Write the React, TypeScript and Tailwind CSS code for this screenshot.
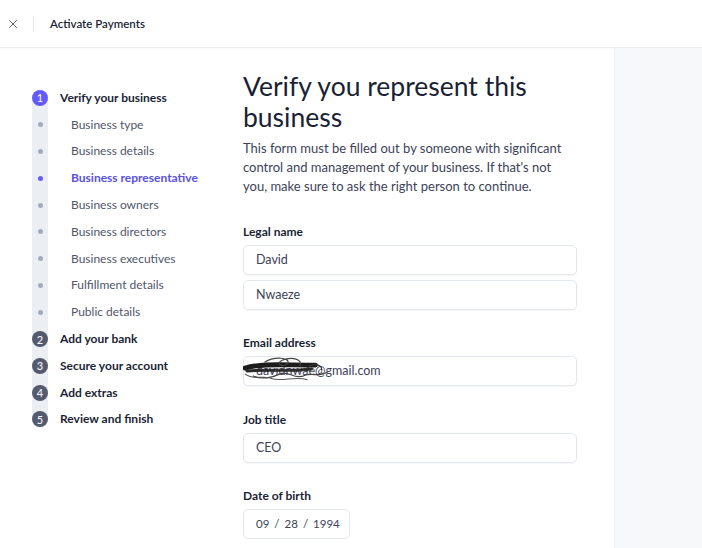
import { X } from "lucide-react";

type Row = { label: string; kind: "step" | "sub"; num?: number; active?: boolean; current?: boolean };

const rows: Row[] = [
  { label: "Verify your business", kind: "step", num: 1, active: true },
  { label: "Business type", kind: "sub" },
  { label: "Business details", kind: "sub" },
  { label: "Business representative", kind: "sub", current: true },
  { label: "Business owners", kind: "sub" },
  { label: "Business directors", kind: "sub" },
  { label: "Business executives", kind: "sub" },
  { label: "Fulfillment details", kind: "sub" },
  { label: "Public details", kind: "sub" },
  { label: "Add your bank", kind: "step", num: 2 },
  { label: "Secure your account", kind: "step", num: 3 },
  { label: "Add extras", kind: "step", num: 4 },
  { label: "Review and finish", kind: "step", num: 5 },
];

function StepRow({ row }: { row: Row }) {
  if (row.kind === "step") {
    return (
      <div className="flex h-[26.8px] items-center">
        <div
          className={`flex h-4 w-4 items-center justify-center rounded-full text-[11px] leading-none text-white ${row.active ? "bg-[#635bff]" : "bg-[#555b6e]"}`}
        >
          {row.num}
        </div>
        <span className="ml-3 text-[12px] font-bold text-[#1a1f36]">{row.label}</span>
      </div>
    );
  }
  return (
    <div className="flex h-[26.8px] items-center">
      <div className="flex w-4 justify-center">
        <div className={`h-[5px] w-[5px] rounded-full ${row.current ? "bg-[#635bff]" : "bg-[#a3acb9]"}`} />
      </div>
      <span className={`ml-[23px] text-[12px] ${row.current ? "font-bold text-[#5851df]" : "text-[#4f566b]"}`}>
        {row.label}
      </span>
    </div>
  );
}

function Field({ value, children }: { value?: string; children?: React.ReactNode }) {
  return (
    <div className="flex h-[30px] items-center rounded-[5px] border border-[#e3e8ee] bg-white px-3 text-[12.5px] text-[#3c4257] shadow-[0_1px_1px_rgba(0,0,0,0.04)]">
      {children ?? value}
    </div>
  );
}

function Label({ children }: { children: React.ReactNode }) {
  return <div className="mb-[4px] text-[12px] leading-[18px] font-bold text-[#1a1f36]">{children}</div>;
}

function Scribble() {
  return (
    <svg viewBox="0 0 90 30" className="absolute left-[-13px] top-[-8px] h-[30px] w-[88px]">
      <path d="M2 14 C 20 9, 40 11, 74 11" stroke="#1c1c1c" strokeWidth="5" fill="none" strokeLinecap="round" />
      <path d="M4 17 C 25 15, 50 18, 70 15" stroke="#2a2a2a" strokeWidth="3" fill="none" strokeLinecap="round" />
      <path d="M10 22 C 18 26, 30 24, 38 20 C 46 16, 52 26, 62 22 C 70 18, 80 24, 86 18" stroke="#444" strokeWidth="1.2" fill="none" />
      <path d="M22 8 C 32 2, 48 3, 46 9 C 42 14, 32 10, 40 6 C 50 2, 62 5, 58 12" stroke="#444" strokeWidth="1.2" fill="none" />
      <path d="M2 20 C 10 27, 24 21, 30 25 C 40 28, 54 22, 66 26" stroke="#555" strokeWidth="1.2" fill="none" />
      <path d="M30 18 C 40 10, 56 24, 68 12 C 74 8, 82 12, 80 16" stroke="#333" strokeWidth="1.2" fill="none" />
    </svg>
  );
}

export default function App() {
  return (
    <div className="flex h-[548px] w-[702px] flex-col overflow-hidden bg-white font-['Lato',sans-serif]">
      <header className="flex h-12 shrink-0 items-center border-b border-[#ebeef1] shadow-[0_1px_2px_rgba(0,0,0,0.03)]">
        <X className="ml-[6px] h-[14px] w-[14px] text-[#4f566b]" strokeWidth={1.6} />
        <div className="ml-[13px] h-4 w-px bg-[#e3e8ee]" />
        <span className="ml-4 text-[11.5px] font-semibold text-[#1a1f36]">Activate Payments</span>
      </header>

      <div className="flex flex-1">
        <div className="flex flex-1">
          <nav className="w-[243px] shrink-0 pl-8 pt-[36.5px]">
            <div className="relative">
              <div className="absolute bottom-[5.4px] left-0 top-[5.4px] w-4 rounded-full bg-[#ebeef2]" />
              <div className="relative">
                {rows.map((r) => (
                  <StepRow key={r.label} row={r} />
                ))}
              </div>
            </div>
          </nav>

          <main className="w-[334px] pt-[23px]">
            <h1 className="text-[26.5px] leading-[31px] text-[#1a1f36]">Verify you represent this business</h1>
            <p className="mt-[6px] text-[13px] leading-[19px] text-[#3c4257]">
              This form must be filled out by someone with significant control and management of your business. If
              that's not you, make sure to ask the right person to continue.
            </p>

            <div className="mt-[27px]">
              <Label>Legal name</Label>
              <Field value="David" />
              <div className="mt-[5px]">
                <Field value="Nwaeze" />
              </div>
            </div>

            <div className="mt-[24px]">
              <Label>Email address</Label>
              <Field>
                <span className="relative">
                  <span className="text-[#3c4257]">davidnwae</span>@gmail.com
                  <Scribble />
                </span>
              </Field>
            </div>

            <div className="mt-[25px]">
              <Label>Job title</Label>
              <Field value="CEO" />
            </div>

            <div className="mt-[24px]">
              <Label>Date of birth</Label>
              <div className="flex h-[30px] w-[107px] items-center gap-[5px] rounded-[5px] border border-[#e3e8ee] pl-3 text-[11.5px] text-[#3c4257]">
                <span>09</span>
                <span>/</span>
                <span>28</span>
                <span>/</span>
                <span>1994</span>
              </div>
            </div>
          </main>
        </div>

        <aside className="w-[88px] shrink-0 border-l border-[#eef0f3] bg-[#f6f8fa]" />
      </div>
    </div>
  );
}
